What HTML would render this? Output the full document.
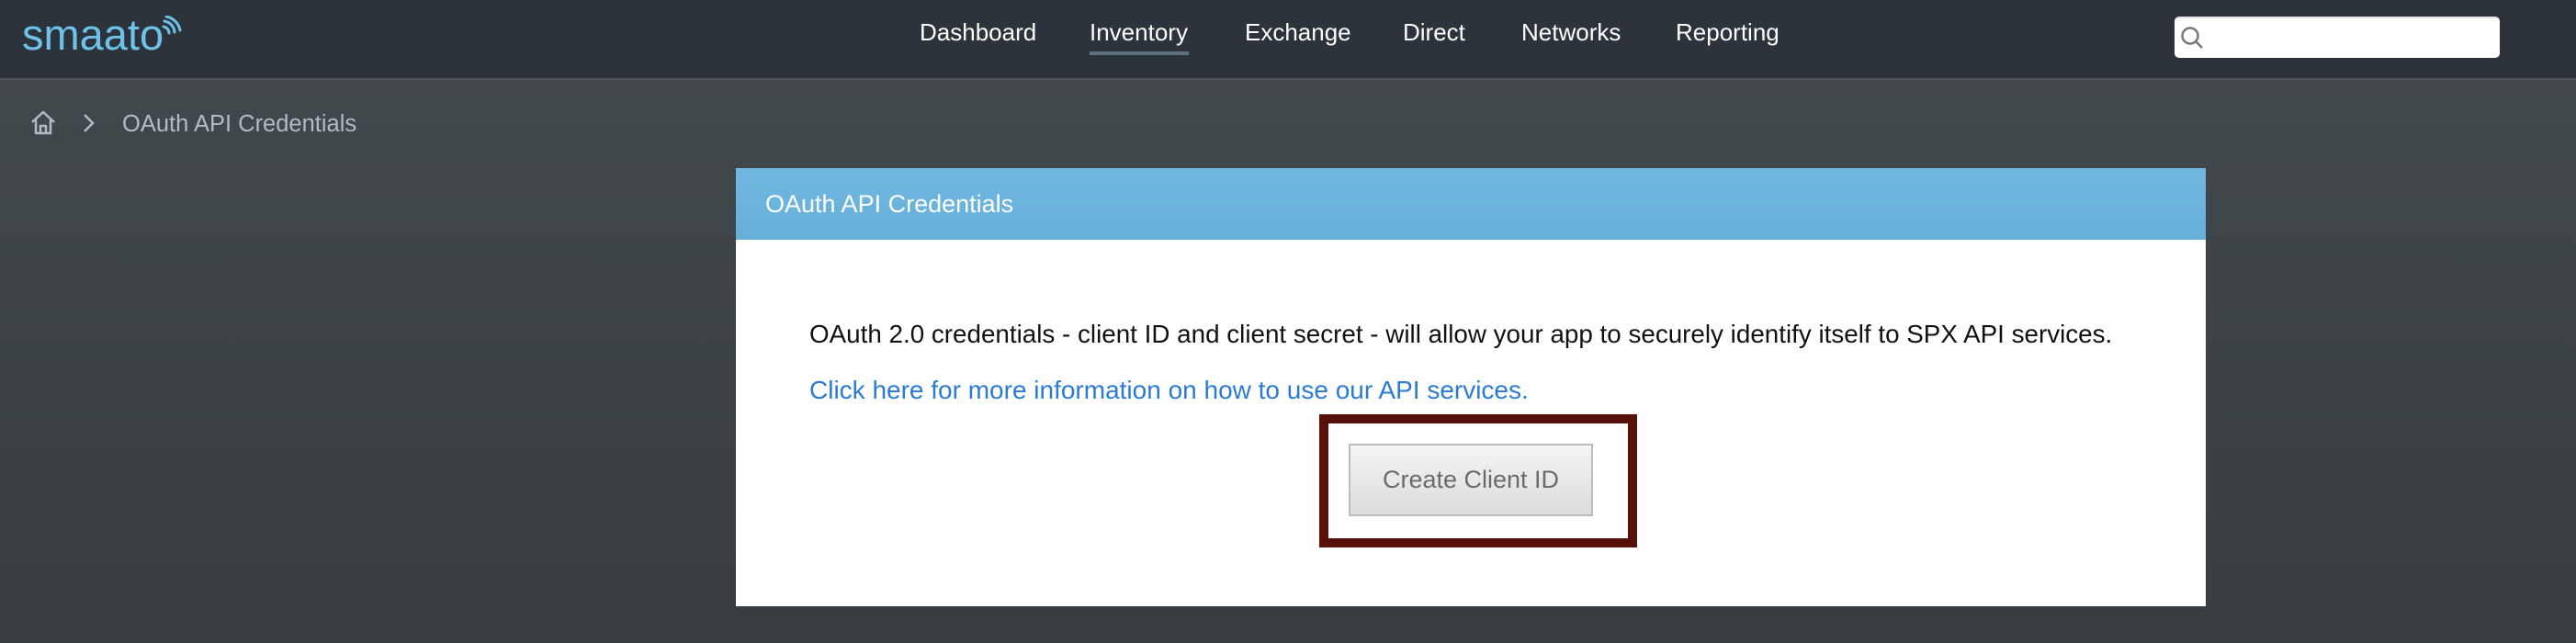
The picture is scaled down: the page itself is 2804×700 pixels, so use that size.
<!DOCTYPE html>
<html><head><meta charset="utf-8"><style>
*{margin:0;padding:0;box-sizing:border-box}
body{width:2804px;height:700px;overflow:hidden;font-family:"Liberation Sans",sans-serif;background:linear-gradient(#434a4e,#373d41);position:relative}
.hdr{position:absolute;left:0;top:0;width:2804px;height:87px;background:#2d333b;border-bottom:2px solid #4a5257}
.logo{position:absolute;left:24px;top:10px;font-size:47px;color:#6ec1e8}
.nav a{position:absolute;top:20px;font-size:26px;color:#fff;text-decoration:none;white-space:nowrap}
.ul{position:absolute;left:1186px;top:56px;width:108px;height:4px;background:#5d707d}
.search{position:absolute;left:2367px;top:18px;width:354px;height:45px;background:#fff;border-radius:5px;border-top:2px solid #e4e4e4}
.crumb{position:absolute;left:133px;top:121px;font-size:25.5px;color:#aebcc4}
.panel{position:absolute;left:801px;top:183px;width:1600px;height:477px;background:#fff}
.ph{height:78px;background:linear-gradient(#6fb8e0,#66afd9);color:#fff;font-size:27px;padding:24px 0 0 32px}
.t1{position:absolute;left:80px;top:165px;font-size:27.8px;color:#111;white-space:nowrap}
.t2{position:absolute;left:80px;top:226px;font-size:28px;color:#2b7bd4;white-space:nowrap}
.box{position:absolute;left:635px;top:268px;width:346px;height:145px;border:10px solid #55110a}
.btn{position:absolute;left:22px;top:22px;width:266px;height:79px;border:2px solid #bcbcbc;background:linear-gradient(#f4f4f4,#dcdcdc);color:#6b6b6b;font-size:27px;text-align:center;line-height:75px}
</style></head><body>
<div class="hdr">
<div class="logo">smaato</div>
<svg style="position:absolute;left:172px;top:17px" width="28" height="26" viewBox="0 0 28 26"><g fill="none" stroke="#6ec1e8" stroke-width="3" stroke-linecap="round"><path d="M6 12a7 7 0 0 1 6 7"/><path d="M7 6a13 13 0 0 1 11 12"/><path d="M9 1a19 19 0 0 1 15 15"/></g></svg>
<div class="nav">
<a style="left:1001px">Dashboard</a><a style="left:1186px">Inventory</a><a style="left:1355px">Exchange</a><a style="left:1527px">Direct</a><a style="left:1656px">Networks</a><a style="left:1824px">Reporting</a>
</div>
<div class="ul"></div>
<div class="search"><svg style="position:absolute;left:6px;top:8px" width="26" height="28" viewBox="0 0 26 28"><circle cx="11" cy="11" r="8.5" fill="none" stroke="#777" stroke-width="2.5"/><path d="M17 17l7 7" stroke="#777" stroke-width="2.5"/></svg></div>
</div>
<svg style="position:absolute;left:33px;top:120px" width="28" height="27" viewBox="0 0 28 27"><path d="M2 13L14 2l12 11M6 10v15h16V10M11 25v-8h6v8" fill="none" stroke="#aebcc4" stroke-width="2.5" stroke-linejoin="round"/></svg>
<svg style="position:absolute;left:89px;top:123px" width="16" height="22" viewBox="0 0 16 22"><path d="M3 2l9 9-9 9" fill="none" stroke="#aebcc4" stroke-width="2.5"/></svg>
<div class="crumb">OAuth API Credentials</div>
<div class="panel">
<div class="ph">OAuth API Credentials</div>
<div class="t1">OAuth 2.0 credentials - client ID and client secret - will allow your app to securely identify itself to SPX API services.</div>
<div class="t2">Click here for more information on how to use our API services.</div>
<div class="box"><div class="btn">Create Client ID</div></div>
</div>
</body></html>
